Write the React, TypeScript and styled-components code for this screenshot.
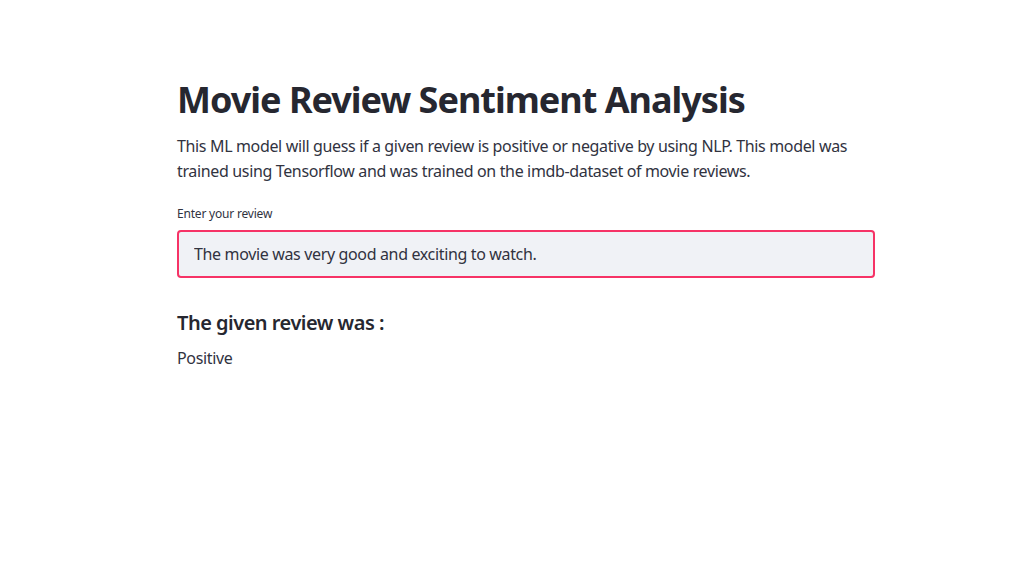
import React from 'react'
import styled, { createGlobalStyle } from 'styled-components'

const GlobalStyle = createGlobalStyle`
  body {
    margin: 0;
    background: #ffffff;
    font-family: "Noto Sans", "Open Sans", sans-serif;
    color: #31333f;
  }
`

const Main = styled.main`
  width: 698px;
  margin-left: 177px;
  padding-top: 72px;
  display: flex;
  flex-direction: column;
`

const Title = styled.h1`
  margin: 0 0 6px;
  font-size: 36px;
  line-height: 56px;
  font-weight: 700;
  color: #262730;
  letter-spacing: -1px;
`

const Text = styled.p`
  margin: 0;
  font-size: 16px;
  line-height: 25px;
  color: #31333f;
  letter-spacing: -0.35px;
`

const Field = styled.div`
  margin-top: 22px;
  display: flex;
  flex-direction: column;
  gap: 8px;
`

const Label = styled.label`
  font-size: 12px;
  line-height: 16px;
  color: #31333f;
  letter-spacing: -0.2px;
`

const Input = styled.input`
  box-sizing: border-box;
  width: 698px;
  height: 48px;
  padding: 0 15px;
  border: 2px solid #f63366;
  border-radius: 4px;
  background: #f0f2f6;
  font-family: inherit;
  font-size: 16px;
  letter-spacing: -0.35px;
  color: #31333f;
  outline: none;
`

const Subheading = styled.h3`
  margin: 30px 0 8px;
  font-size: 20px;
  line-height: 30px;
  font-weight: 600;
  color: #262730;
  letter-spacing: -0.5px;
`

export default function App() {
  return (
    <>
      <GlobalStyle />
      <Main>
        <Title>Movie Review Sentiment Analysis</Title>
        <Text>
          This ML model will guess if a given review is positive or negative by using NLP. This model was
          trained using Tensorflow and was trained on the imdb-dataset of movie reviews.
        </Text>
        <Field>
          <Label>Enter your review</Label>
          <Input defaultValue="The movie was very good and exciting to watch." />
        </Field>
        <Subheading>The given review was :</Subheading>
        <Text>Positive</Text>
      </Main>
    </>
  )
}
